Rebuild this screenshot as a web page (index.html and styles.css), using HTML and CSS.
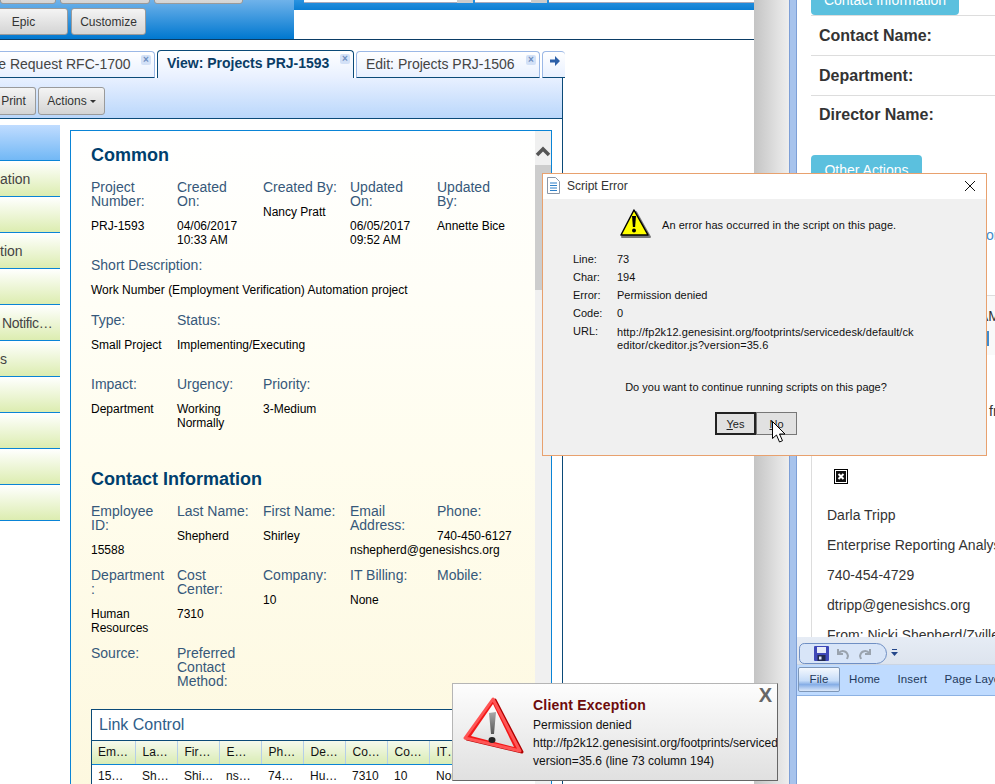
FILE: index.html
```html
<!DOCTYPE html>
<html lang="en">
<head>
    <meta charset="UTF-8">
    <meta name="viewport" content="width=device-width, initial-scale=1.0">
    <title>View: Projects PRJ-1593</title>
    <link rel="stylesheet" href="styles.css">
</head>
<body>
<div class="desktop">

    <!-- main browser window -->
    <section class="browser">
        <header class="top">
            <div class="top-left">
                <div class="btn-row btn-row-cut">
                    <span class="btn w-56"></span>
                    <span class="btn w-91"></span>
                    <span class="btn w-89"></span>
                </div>
                <div class="btn-row">
                    <a class="btn btn-epic">Epic</a>
                    <a class="btn w-75">Customize</a>
                </div>
            </div>
            <div class="top-right">
                <div class="search-band">
                    <span class="search-input w-153"></span>
                    <span class="search-btn"></span>
                    <span class="search-input w-56"></span>
                    <span class="search-btn"></span>
                    <span class="search-input w-rest"></span>
                </div>
            </div>
        </header>

        <nav class="tabs">
            <div class="tab tab-first">Change Request RFC-1700<span class="tab-x">&times;</span></div>
            <div class="tab tab-active">View: Projects PRJ-1593<span class="tab-x">&times;</span></div>
            <div class="tab tab-edit">Edit: Projects PRJ-1506<span class="tab-x">&times;</span></div>
            <div class="tab tab-more">
                <svg width="10" height="10" viewBox="0 0 10 10"><path d="M0 3.500h5V0l5 5-5 5V6.500H0z" fill="#2b5fa8"/></svg>
            </div>
        </nav>

        <div class="panel">
            <div class="toolbar">
                <a class="btn btn-print">Print</a>
                <a class="btn btn-actions">Actions <i class="caret"></i></a>
            </div>

            <div class="work">
                <ul class="sidenav">
                    <li class="sidenav-head"></li>
                    <li>ation</li>
                    <li></li>
                    <li>tion</li>
                    <li></li>
                    <li class="indent">Notific…</li>
                    <li>s</li>
                    <li></li>
                    <li></li>
                    <li></li>
                    <li></li>
                </ul>

                <div class="details">
                    <div class="details-body">
                        <h2>Common</h2>
                        <div class="fields">
                            <div><label>Project Number:</label><p>PRJ-1593</p></div>
                            <div><label>Created On:</label><p>04/06/2017 10:33 AM</p></div>
                            <div><label>Created By:</label><p>Nancy Pratt</p></div>
                            <div><label>Updated On:</label><p>06/05/2017 09:52 AM</p></div>
                            <div><label>Updated By:</label><p>Annette Bice</p></div>
                        </div>
                        <div class="fields after-16">
                            <div class="span-5"><label>Short Description:</label><p>Work Number (Employment Verification) Automation project</p></div>
                        </div>
                        <div class="fields after-25">
                            <div><label>Type:</label><p>Small Project</p></div>
                            <div class="span-3"><label>Status:</label><p>Implementing/Executing</p></div>
                        </div>
                        <div class="fields">
                            <div><label>Impact:</label><p>Department</p></div>
                            <div><label>Urgency:</label><p>Working Normally</p></div>
                            <div><label>Priority:</label><p>3-Medium</p></div>
                        </div>

                        <h2 class="second">Contact Information</h2>
                        <div class="fields">
                            <div><label>Employee ID:</label><p>15588</p></div>
                            <div><label>Last Name:</label><p>Shepherd</p></div>
                            <div><label>First Name:</label><p>Shirley</p></div>
                            <div><label>Email Address:</label><p>nshepherd@genesishcs.org</p></div>
                            <div><label>Phone:</label><p>740-450-6127</p></div>
                        </div>
                        <div class="fields">
                            <div><label>Department:</label><p>Human Resources</p></div>
                            <div><label>Cost Center:</label><p>7310</p></div>
                            <div><label>Company:</label><p>10</p></div>
                            <div><label>IT Billing:</label><p>None</p></div>
                            <div><label>Mobile:</label></div>
                        </div>
                        <div class="fields after-21">
                            <div><label>Source:</label></div>
                            <div><label>Preferred Contact Method:</label></div>
                        </div>

                        <div class="link-control">
                            <div class="link-title">Link Control</div>
                            <table>
                                <tr>
                                    <th>Em…</th><th>La…</th><th>Fir…</th><th>E…</th><th>Ph…</th><th>De…</th><th>Co…</th><th>Co…</th><th>IT…</th><th></th><th></th>
                                </tr>
                                <tr>
                                    <td>15…</td><td>Sh…</td><td>Shi…</td><td>ns…</td><td>74…</td><td>Hu…</td><td>7310</td><td>10</td><td>None</td><td></td><td></td>
                                </tr>
                            </table>
                        </div>
                    </div>
                    <div class="scrollbar">
                        <svg class="scroll-up" width="16" height="12" viewBox="0 0 16 12"><path d="M2 10l6-6 6 6" fill="none" stroke="#555" stroke-width="3.500"/></svg>
                        <div class="scroll-thumb"></div>
                    </div>
                </div>
            </div>
        </div>
    </section>

    <!-- window on the right -->
    <section class="side">
        <div class="side-gutter"></div>
        <div class="side-bar"></div>
        <div class="side-main">
            <div class="side-content">
                <div class="pill pill-cut">Contact Information</div>
                <div class="contact-row">Contact Name:</div>
                <div class="contact-row">Department:</div>
                <div class="contact-row contact-row-last">Director Name:</div>
                <div class="pill pill-actions">Other Actions</div>
                <div class="actions-panel">
                    <div class="peek peek-or">or</div>
                    <div class="peek-table">
                        <div class="peek">AM</div>
                        <div class="peek-bar"></div>
                    </div>
                    <div class="peek peek-fr">fr</div>
                    <div class="broken-img">
                        <svg width="14" height="15" viewBox="0 0 14 15">
                            <rect x="0.5" y="0.5" width="13" height="14" fill="#fff" stroke="#000"/>
                            <rect x="2" y="2" width="10" height="11" fill="#111"/>
                            <path d="M4.500 5l5 5M9.500 5l-5 5" stroke="#fff" stroke-width="2"/>
                        </svg>
                    </div>
                    <p class="mail-line">Darla Tripp</p>
                    <p class="mail-line">Enterprise Reporting Analyst</p>
                    <p class="mail-line">740-454-4729</p>
                    <p class="mail-line">dtripp@genesishcs.org</p>
                    <p class="mail-line">From: Nicki Shepherd/Zville</p>
                </div>
            </div>

            <div class="ribbon">
                <div class="qat-row">
                    <div class="qat">
                        <svg width="15" height="15" viewBox="0 0 15 15">
                            <rect width="15" height="15" rx="1" fill="#3f48b8"/>
                            <rect x="3" y="1" width="9" height="6" fill="#e8ecf8"/>
                            <rect x="3.500" y="9" width="8" height="6" fill="#222a50"/>
                            <rect x="5" y="10.500" width="2.500" height="3" fill="#dfe4f5"/>
                        </svg>
                        <svg width="13" height="13" viewBox="0 0 13 13"><path d="M1 2v5h5M1.500 6.500C4 3 10 3 11 9l-1 3" fill="none" stroke="#9aa3ae" stroke-width="2"/></svg>
                        <svg width="13" height="13" viewBox="0 0 13 13"><path d="M12 2v5H7M11.500 6.500C9 3 3 3 2 9l1 3" fill="none" stroke="#9aa3ae" stroke-width="2"/></svg>
                    </div>
                    <svg class="qat-more" width="7" height="7" viewBox="0 0 7 7"><path d="M1 0h5v1H1zM0 3h7L3.500 7z" fill="#24478a"/></svg>
                </div>
                <div class="ribbon-tabs">
                    <span class="file-tab">File</span>
                    <span class="ribbon-tab">Home</span>
                    <span class="ribbon-tab">Insert</span>
                    <span class="ribbon-tab">Page Layout</span>
                </div>
            </div>
        </div>
    </section>

    <!-- IE script error dialog -->
    <section class="script-error">
        <div class="dialog-title">
            <svg width="13" height="17" viewBox="0 0 13 17">
                <path d="M.5.500h8l4 4v12H.5z" fill="#fff" stroke="#8b97a8"/>
                <path d="M3 6h7M3 8.500h7M3 11h7M3 13.500h7" stroke="#2d7fc8"/>
            </svg>
            <span class="dialog-name">Script Error</span>
            <svg class="dialog-close" width="10" height="10" viewBox="0 0 10 10"><path d="M0 0l10 10M10 0L0 10" stroke="#111"/></svg>
        </div>
        <div class="dialog-head">
            <svg width="33" height="33" viewBox="0 0 33 33">
                <path d="M17 4l14 25H3z" fill="#777" stroke="#777" stroke-width="2" stroke-linejoin="round"/>
                <path d="M15 2L2 27h27z" fill="#ff0" stroke="#000" stroke-width="1.500" stroke-linejoin="round"/>
                <path d="M13 8h4l-.9 11h-2.200z" fill="#000"/>
                <circle cx="15" cy="22.500" r="2" fill="#000"/>
            </svg>
            <span>An error has occurred in the script on this page.</span>
        </div>
        <dl class="error-info">
            <dt>Line:</dt><dd>73</dd>
            <dt>Char:</dt><dd>194</dd>
            <dt>Error:</dt><dd>Permission denied</dd>
            <dt>Code:</dt><dd>0</dd>
            <dt>URL:</dt><dd class="error-url">http://fp2k12.genesisint.org/footprints/servicedesk/default/ck<br>editor/ckeditor.js?version=35.6</dd>
        </dl>
        <p class="error-question">Do you want to continue running scripts on this page?</p>
        <div class="dialog-buttons">
            <button class="dialog-btn dialog-btn-default"><u>Y</u>es</button>
            <button class="dialog-btn"><u>N</u>o</button>
        </div>
        <svg class="cursor" width="14" height="22" viewBox="0 0 14 22">
            <path d="M.5.500v17l4-3.500 3 7 3-1.300-3-6.700h5.500z" fill="#fff" stroke="#000"/>
        </svg>
    </section>

    <!-- client exception toast -->
    <section class="exception">
        <svg class="exception-icon" width="64" height="64" viewBox="0 0 64 64">
            <defs>
                <linearGradient id="warnFill" x1="0" y1="0" x2="0" y2="1">
                    <stop offset="0" stop-color="#fff"/>
                    <stop offset="1" stop-color="#dcdcdc"/>
                </linearGradient>
                <linearGradient id="warnMark" x1="0" y1="0" x2="0" y2="1">
                    <stop offset="0" stop-color="#aaa"/>
                    <stop offset="1" stop-color="#555"/>
                </linearGradient>
            </defs>
            <path d="M33 5L5 44l55 13z" fill="#b00000" stroke="#b00000" stroke-width="3" stroke-linejoin="round"/>
            <path d="M31 4L3 43l55 13z" fill="#f21818" stroke="#f55" stroke-width="3" stroke-linejoin="round"/>
            <path d="M31 9L9 41l43 11z" fill="url(#warnFill)"/>
            <path d="M27 18l7-1-2 22h-3z" fill="url(#warnMark)"/>
            <ellipse cx="30" cy="45" rx="3.500" ry="3" fill="#222"/>
        </svg>
        <div class="exception-text">
            <h3>Client Exception</h3>
            <p>Permission denied</p>
            <p>http://fp2k12.genesisint.org/footprints/servicedesk/default/ckeditor/ckeditor.js?</p>
            <p>version=35.6 (line 73 column 194)</p>
        </div>
        <span class="exception-close">X</span>
    </section>
</div>
</body>
</html>
```

FILE: styles.css
```css
* {
    box-sizing: border-box;
}

body {
    margin: 0;
    background: #fff;
    font-family: "Liberation Sans", Arial, sans-serif;
    color: #333;
}

p, h2, h3, ul, dl, dd {
    margin: 0;
    padding: 0;
}

.desktop {
    position: relative;
    width: 995px;
    height: 784px;
    overflow: hidden;
}

/* main window */
.browser {
    position: absolute;
    left: 0;
    top: 0;
    width: 754px;
    height: 784px;
    background: #fff;
    overflow: hidden;
}

.top {
    display: flex;
    height: 40px;
    border-bottom: 1px solid #0b3d66;
}

.top-left {
    width: 294px;
    background: linear-gradient(#6fb2ea, #0078d0);
}

.top-right {
    flex: 1;
}

.btn-row {
    display: flex;
    gap: 3px;
    margin-top: 4px;
}

.btn-row-cut {
    height: 4px;
    margin-top: 0;
    gap: 4px;
    overflow: hidden;
    margin-bottom: 4px;
}

.btn-row-cut .btn {
    height: 26px;
    margin-top: -22px;
}

.btn {
    display: flex;
    align-items: center;
    justify-content: center;
    height: 27px;
    border: 1px solid #9a9a9a;
    border-radius: 3px;
    background: linear-gradient(#f4f4f4, #d4d4d4);
    font-size: 12px;
    color: #333;
}

.w-56 { width: 56px; }
.w-91 { width: 90px; }
.w-89 { width: 89px; }
.w-75 { width: 75px; }

.btn-epic {
    width: 89px;
    margin-left: -21px;
}

.search-band {
    display: flex;
    height: 10px;
    padding-left: 10px;
    background: linear-gradient(#2a93e0, #0b7ed3);
    align-items: flex-start;
    gap: 0;
}

.search-input {
    height: 3px;
    background: #fff;
    border-bottom: 1px solid #aab;
}

.search-input.w-153 { width: 153px; }
.search-input.w-56 { width: 56px; margin-left: 2px; }
.search-input.w-rest { flex: 1; margin-left: 2px; }

.search-btn {
    width: 16px;
    height: 3px;
    background: #ccc;
}

/* tabs */
.tabs {
    display: flex;
    align-items: flex-end;
    gap: 2px;
    width: 563px;
    height: 38px;
    margin-left: -61px;
    overflow: visible;
    font-size: 14px;
}

.tab {
    position: relative;
    height: 27px;
    padding-top: 4px;
    border: 1px solid #9bb8e6;
    border-bottom: 1px solid #0b4a78;
    border-radius: 4px 4px 0 0;
    background: linear-gradient(#fff, #e8f0ff);
    white-space: nowrap;
    color: #444;
}

.tab-first {
    flex: none;
    width: 216px;
    padding-left: 17px;
}

.tab-active {
    flex: none;
    width: 197px;
    height: 28px;
    padding-left: 9px;
    border-color: #0b4a78;
    border-bottom: 0;
    font-weight: bold;
    color: #0a3d66;
}

.tab-edit {
    flex: none;
    width: 184px;
    padding-left: 9px;
}

.tab-more {
    flex: none;
    width: 23px;
    padding: 4px 0 0 7px;
    border-right: 0;
}

.tab-more svg {
    display: block;
}

.tab-x {
    position: absolute;
    right: 3px;
    top: 3px;
    width: 10px;
    height: 10px;
    border-radius: 2px;
    background: #d3e1f7;
    font-size: 10px;
    font-weight: bold;
    line-height: 9px;
    text-align: center;
    color: #6f8fc0;
}

/* panel under the tabs */
.panel {
    width: 563px;
    height: 706px;
    border-right: 1px solid #0b4a78;
}

.toolbar {
    display: flex;
    gap: 2px;
    height: 41px;
    padding-top: 9px;
    border-bottom: 1px solid #0b4a78;
    background: linear-gradient(#e8f0ff, #bad7fb);
}

.toolbar .btn {
    height: 28px;
}

.btn-print {
    width: 36px;
    padding-right: 8px;
    border-left: 0;
    border-radius: 0 3px 3px 0;
}

.btn-actions {
    width: 67px;
    gap: 3px;
}

.caret {
    width: 0;
    height: 0;
    border-left: 3px solid transparent;
    border-right: 3px solid transparent;
    border-top: 3px solid #333;
}

.work {
    display: flex;
    padding-top: 6px;
}

.sidenav {
    flex: none;
    width: 60px;
    list-style: none;
    overflow: hidden;
    font-size: 14px;
    color: #444;
}

.sidenav li {
    height: 36px;
    line-height: 36px;
    border-bottom: 1px solid #0a84d6;
    background: linear-gradient(#fff, #dcedb0);
    white-space: nowrap;
}

.sidenav .sidenav-head {
    background: linear-gradient(#c0dcff, #72b8f5);
}

.sidenav .indent {
    padding-left: 2px;
    letter-spacing: -0.3px;
}

/* record details */
.details {
    display: flex;
    flex: none;
    width: 482px;
    height: 660px;
    margin: 5px 0 0 10px;
    border: 1px solid #0a84d6;
    border-bottom: 0;
    background: linear-gradient(#fff 0%, #fffdee 50%, #fdf8df 100%);
    overflow: hidden;
}

.details-body {
    flex: none;
    width: 464px;
    padding: 13px 0 0 20px;
    overflow: hidden;
}

h2 {
    height: 22px;
    margin-bottom: 14px;
    font-size: 18px;
    line-height: 22px;
    color: #003f6e;
}

h2.second {
    margin-top: 38px;
}

.fields {
    display: grid;
    grid-template-columns: 86px 86px 87px 87px 86px;
    margin-bottom: 11px;
}

.fields.after-16 { margin-bottom: 16px; }
.fields.after-25 { margin-bottom: 25px; }
.fields.after-21 { margin-bottom: 21px; }

.fields .span-5 { grid-column: span 5; }
.fields .span-3 { grid-column: span 3; }

.fields > div {
    padding-right: 11px;
}

.fields .span-5, .fields .span-3 {
    padding-right: 0;
}

.fields label {
    display: block;
    font-size: 14px;
    line-height: 14px;
    color: #36587a;
    overflow-wrap: anywhere;
}

.fields p {
    margin-top: 11px;
    font-size: 12px;
    line-height: 14px;
    color: #000;
}

.link-control {
    width: 520px;
    border: 1px solid #0b4a78;
    border-bottom: 0;
    background: #fff;
}

.link-title {
    height: 31px;
    padding-left: 7px;
    border-bottom: 1px solid #0b4a78;
    font-size: 16px;
    line-height: 30px;
    color: #2f5e8a;
}

table {
    border-collapse: collapse;
    table-layout: fixed;
    width: 463px;
    font-size: 12px;
}

th, td {
    width: 42px;
    padding: 0 0 0 7px;
    text-align: left;
    font-weight: normal;
    white-space: nowrap;
    overflow: hidden;
    color: #111;
}

th:first-child, td:first-child {
    width: 43px;
    padding-left: 6px;
}

th {
    height: 23px;
    border-right: 1px solid #b5cfe8;
    border-bottom: 1px solid #0a84d6;
    background: linear-gradient(#f5f9ec, #d9ecb4);
}

td {
    height: 24px;
}

.scrollbar {
    flex: none;
    width: 16px;
    background: #f0f0f0;
}

.scroll-up {
    display: block;
    margin-top: 14px;
}

.scroll-thumb {
    height: 125px;
    margin-top: 8px;
    background: #cdcdcd;
}

/* right window */
.side {
    position: absolute;
    left: 754px;
    top: 0;
    display: flex;
    width: 241px;
    height: 784px;
}

.side-gutter {
    flex: none;
    width: 35px;
    background: linear-gradient(90deg, #c4c4c4, #e2e2e2 70%, #eeeeee);
}

.side-bar {
    flex: none;
    width: 8px;
    border-left: 1px solid #7d9fd6;
    border-right: 1px solid #7d9fd6;
    background: #a7c3ec;
}

.side-main {
    flex: none;
    width: 198px;
    display: flex;
    flex-direction: column;
    background: #fff;
    overflow: hidden;
}

.side-content {
    height: 637px;
    padding-left: 14px;
    overflow: hidden;
}

.pill {
    padding-top: 7px;
    border-radius: 4px 4px 0 0;
    background: #5bc0de;
    font-size: 14px;
    color: #fff;
    text-align: center;
}

.pill-cut {
    width: 148px;
    height: 15px;
    margin-top: 0;
    padding-top: 0;
    line-height: 0;
    border-radius: 0 0 4px 4px;
    overflow: hidden;
}

.contact-row {
    width: 260px;
    height: 40px;
    padding: 10px 0 0 8px;
    border-top: 1px solid #ddd;
    font-size: 16px;
    font-weight: bold;
    line-height: 19px;
    color: #333;
}

.contact-row-last {
    padding-top: 9px;
}

.pill-actions {
    width: 111px;
    height: 26px;
    margin-top: 20px;
    line-height: 16px;
}

.actions-panel {
    height: 460px;
    padding-left: 15px;
    border-left: 1px solid #ddd;
    font-size: 14px;
    color: #333;
}

.peek {
    padding-left: 159px;
    white-space: nowrap;
    line-height: 20px;
}

.peek-or {
    margin-top: 44px;
    color: #428bca;
}

.peek-table {
    height: 60px;
    margin: 50px -15px 0;
    padding-top: 10px;
    border-top: 1px solid #ddd;
    background: #f9f9f9;
}

.peek-table .peek {
    padding-left: 167px;
}

.peek-bar {
    width: 2px;
    height: 15px;
    margin: 5px 0 0 175px;
    background: #428bca;
}

.peek-fr {
    margin-top: 46px;
    padding-left: 162px;
}

.broken-img {
    height: 15px;
    margin: 48px 0 0 7px;
}

.broken-img svg {
    display: block;
}

.mail-line {
    margin-top: 10px;
    line-height: 20px;
    white-space: nowrap;
}

.broken-img + .mail-line {
    margin-top: 21px;
}

/* word ribbon */
.ribbon {
    flex: 1;
}

.qat-row {
    display: flex;
    align-items: flex-end;
    height: 27px;
    padding-left: 2px;
    background: linear-gradient(#e6ecf5, #dde4ee);
}

.qat {
    display: flex;
    align-items: center;
    gap: 8px;
    width: 88px;
    height: 21px;
    padding-left: 14px;
    border: 1px solid #6f8fc4;
    border-radius: 7px 14px 14px 7px;
    background: #d8e5f8;
}

.qat-more {
    margin: 0 0 8px 4px;
}

.ribbon-tabs {
    display: flex;
    align-items: center;
    height: 32px;
    padding: 0 0 2px 1px;
    border-top: 1px solid #cbd5e3;
    border-bottom: 1px solid #8db2e3;
    background: #bfdbff;
    font-size: 11.5px;
    letter-spacing: 0.1px;
    color: #1e395b;
    white-space: nowrap;
}

.file-tab {
    flex: none;
    width: 42px;
    height: 25px;
    border: 1px solid #7e97b8;
    border-radius: 2px;
    background: linear-gradient(#f4f8fe 0%, #c6dcf8 55%, #86aee6 72%, #dbe8fa 100%);
    line-height: 23px;
    text-align: center;
}

.ribbon-tab {
    margin-left: 9px;
    margin-right: 8.5px;
}

/* script error dialog */
.script-error {
    position: absolute;
    left: 542px;
    top: 173px;
    width: 445px;
    height: 283px;
    border: 1px solid #e8a16e;
    background: #f0f0f0;
    font-size: 11px;
    color: #111;
}

.dialog-title {
    display: flex;
    align-items: center;
    height: 25px;
    padding: 0 11px 2px 4px;
    background: #fff;
}

.dialog-name {
    margin-left: 7px;
    font-size: 12px;
    color: #333;
}

.dialog-close {
    margin-left: auto;
}

.dialog-head {
    display: flex;
    align-items: center;
    gap: 10px;
    margin: 9px 0 0 76px;
    letter-spacing: 0.05px;
}

.dialog-head svg {
    display: block;
}

.error-info {
    display: grid;
    grid-template-columns: 44px 1fr;
    row-gap: 5px;
    margin: 12px 0 0 30px;
    line-height: 13px;
}

.error-url {
    margin-top: 1px;
    letter-spacing: 0.08px;
}

.error-question {
    margin-top: 29px;
    padding-right: 17px;
    text-align: center;
    line-height: 13px;
}

.dialog-buttons {
    display: flex;
    justify-content: center;
    margin-top: 18px;
    padding-right: 17px;
}

.dialog-btn {
    width: 41px;
    height: 23px;
    padding: 0;
    border: 1px solid #777;
    background: #e1e1e1;
    font-family: inherit;
    font-size: 11px;
    color: #222;
}

.dialog-btn-default {
    border: 2px solid #222;
}

.cursor {
    position: absolute;
    left: 229px;
    top: 247px;
}

/* client exception */
.exception {
    position: absolute;
    left: 452px;
    top: 683px;
    display: flex;
    width: 326px;
    height: 98px;
    border: 1px solid #b5b5b5;
    border-right-color: #666;
    border-bottom-color: #666;
    background: linear-gradient(#fdfdfd, #e0e0e0);
    overflow: hidden;
}

.exception-icon {
    flex: none;
    margin: 11px 7px 0 9px;
}

.exception-text {
    padding-top: 12px;
    font-size: 12px;
    line-height: 18px;
    white-space: nowrap;
    color: #111;
}

.exception-text h3 {
    margin-bottom: 2px;
    font-size: 14px;
    line-height: 18px;
    letter-spacing: 0.2px;
    color: #6d0b0b;
}

.exception-close {
    position: absolute;
    right: 5px;
    top: 0;
    font-size: 20px;
    font-weight: bold;
    line-height: 22px;
    color: #666;
}
```
